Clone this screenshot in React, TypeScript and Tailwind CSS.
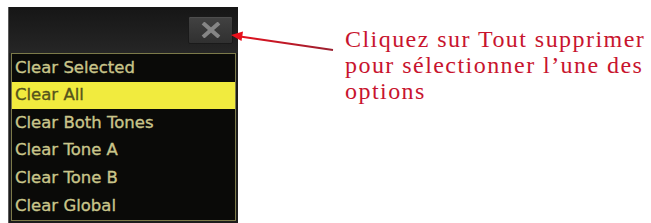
import React from "react";

const items = [
  "Clear Selected",
  "Clear All",
  "Clear Both Tones",
  "Clear Tone A",
  "Clear Tone B",
  "Clear Global",
];

export default function App() {
  return (
    <div className="relative flex w-[651px] h-[223px] bg-white overflow-hidden">
      {/* panel */}
      <div className="mt-[7px] ml-[8px] w-[230px] h-[216px] flex flex-col bg-[#1c1c1c] border-l border-[#5a5a5a]">
        <div className="h-[46px] flex items-start justify-end pt-[9px] pr-[5px] bg-gradient-to-b from-[#161616] to-[#262626]">
          <div className="w-[45px] h-[28px] flex items-center justify-center rounded-[2px] bg-gradient-to-b from-[#424242] to-[#303030] border border-[#1a1a1a] shadow-[inset_0_1px_0_#4e4e4e]">
            <svg width="22" height="16" viewBox="0 0 22 16">
              <path d="M3 1 L19 15 M19 1 L3 15" stroke="#858585" strokeWidth="4" strokeLinecap="butt" />
            </svg>
          </div>
        </div>
        <div className="ml-[2px] mr-[2px] h-[168px] flex flex-col border border-[#7c7a4a] bg-[#0a0a08]">
          {items.map((t, i) => (
            <div
              key={t}
              className={
                i === 1
                  ? "h-[27.6px] flex items-center pl-[3px] bg-[#f1eb3e] text-[#55541c] text-[16.5px] leading-none [-webkit-text-stroke:0.35px_currentColor] [font-family:'DejaVu_Sans',sans-serif]"
                  : "h-[27.6px] flex items-center pl-[3px] text-[#c9c58a] text-[16.5px] leading-none [-webkit-text-stroke:0.35px_currentColor] [font-family:'DejaVu_Sans',sans-serif]"
              }
            >
              {t}
            </div>
          ))}
        </div>
      </div>
      {/* annotation text */}
      <div className="ml-[107px] mt-[26px] text-[#c8142e] text-[24px] leading-[26px] tracking-[1.45px] [font-family:'Liberation_Serif',serif]">
        <div>Cliquez sur Tout supprimer</div>
        <div>pour sélectionner l’une des</div>
        <div>options</div>
      </div>
      {/* arrow */}
      <svg className="absolute left-0 top-0" width="651" height="223" viewBox="0 0 651 223">
        <defs>
          <linearGradient id="ar" x1="233" y1="35" x2="333" y2="50" gradientUnits="userSpaceOnUse">
            <stop offset="0" stopColor="#e8101c" />
            <stop offset="1" stopColor="#9a2030" />
          </linearGradient>
        </defs>
        <line x1="240" y1="36.5" x2="333" y2="50" stroke="url(#ar)" strokeWidth="2" />
        <path d="M231 35 L243 31.5 L241.5 41 Z" fill="#e8101c" />
      </svg>
    </div>
  );
}
